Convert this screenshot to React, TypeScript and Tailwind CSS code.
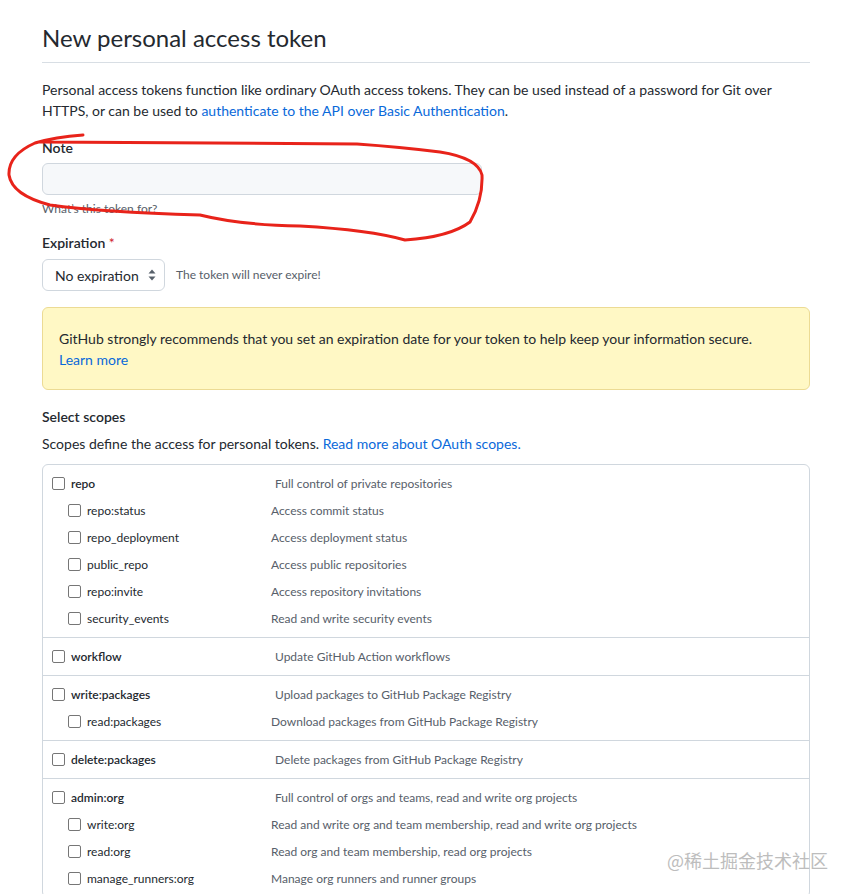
import type { ReactNode } from "react"

type Scope = {
    name: string
    desc: string
    children?: { name: string; desc: string }[]
}

const scopes: Scope[] = [
    {
        name: "repo",
        desc: "Full control of private repositories",
        children: [
            { name: "repo:status", desc: "Access commit status" },
            { name: "repo_deployment", desc: "Access deployment status" },
            { name: "public_repo", desc: "Access public repositories" },
            { name: "repo:invite", desc: "Access repository invitations" },
            { name: "security_events", desc: "Read and write security events" },
        ],
    },
    { name: "workflow", desc: "Update GitHub Action workflows" },
    {
        name: "write:packages",
        desc: "Upload packages to GitHub Package Registry",
        children: [{ name: "read:packages", desc: "Download packages from GitHub Package Registry" }],
    },
    { name: "delete:packages", desc: "Delete packages from GitHub Package Registry" },
    {
        name: "admin:org",
        desc: "Full control of orgs and teams, read and write org projects",
        children: [
            { name: "write:org", desc: "Read and write org and team membership, read and write org projects" },
            { name: "read:org", desc: "Read org and team membership, read org projects" },
            { name: "manage_runners:org", desc: "Manage org runners and runner groups" },
        ],
    },
]

const Box = () => (
    <span className="w-[13px] h-[13px] shrink-0 border border-[#767676] rounded-[2px] bg-white" />
)

function ScopeRow({ name, desc, sub }: { name: string; desc: string; sub?: boolean }): ReactNode {
    return (
        <div className={sub ? "flex items-center h-[27px] pl-[25px]" : "flex items-center h-[27px] pl-[9px]"}>
            <Box />
            <span className={sub
                ? "ml-[6px] w-[184px] shrink-0 text-[12px] text-[#24292f]"
                : "ml-[6px] w-[204px] shrink-0 text-[12px] font-semibold text-[#24292f]"}>
                {name}
            </span>
            <span className="text-[12px] text-[#57606a]">{desc}</span>
        </div>
    )
}

export default function App() {
    return (
        <div className="relative min-h-screen bg-white text-[#24292f] font-['Lato','Noto_Sans_CJK_SC',sans-serif]">
            <div className="ml-[42px] w-[768px] pt-[20px] pb-10">
                <h2 className="text-[24px] leading-[36px] font-normal pb-[6px] border-b border-[#d8dee4]">
                    New personal access token
                </h2>

                <p className="mt-[16px] text-[14px] leading-[21px]">
                    Personal access tokens function like ordinary OAuth access tokens. They can be used instead of a password for Git over HTTPS, or can be used to{" "}
                    <a className="text-[#0969da]">authenticate to the API over Basic Authentication</a>.
                </p>

                <div className="mt-[16px]">
                    <div className="text-[14px] leading-[21px] font-semibold">Note</div>
                    <div className="mt-[5px] w-[440px] h-[32px] bg-[#f6f8fa] border border-[#d0d7de] rounded-[6px]" />
                    <div className="mt-[5px] text-[12px] leading-[18px] text-[#57606a]">What’s this token for?</div>
                </div>

                <div className="mt-[14px]">
                    <div className="text-[14px] leading-[21px] font-semibold">
                        Expiration <span className="text-[#cf222e] font-normal">*</span>
                    </div>
                    <div className="mt-[6px] flex items-center">
                        <div className="w-[123px] h-[32px] flex items-center justify-between pl-[12px] pr-[8px] border border-[#d0d7de] rounded-[6px] bg-white text-[14px]">
                            <span>No expiration</span>
                            <svg width="8" height="12" viewBox="0 0 8 12" className="fill-[#57606a]">
                                <path d="M4 0.5 L7.5 4.5 H0.5 Z" />
                                <path d="M4 11.5 L7.5 7.5 H0.5 Z" />
                            </svg>
                        </div>
                        <span className="ml-[11px] text-[12px] text-[#57606a]">The token will never expire!</span>
                    </div>
                </div>

                <div className="mt-[16px] px-[16px] pt-[20px] pb-[19px] bg-[#fff8c5] border border-[#ecdb94] rounded-[6px] text-[14px] leading-[21px]">
                    GitHub strongly recommends that you set an expiration date for your token to help keep your information secure.
                    <br />
                    <a className="text-[#0969da]">Learn more</a>
                </div>

                <div className="mt-[16px] text-[14px] leading-[21px] font-semibold">Select scopes</div>
                <p className="mt-[6px] text-[14px] leading-[21px]">
                    Scopes define the access for personal tokens. <a className="text-[#0969da]">Read more about OAuth scopes.</a>
                </p>

                <div className="mt-[10px] border border-[#d0d7de] rounded-[6px]">
                    {scopes.map((s, i) => (
                        <div key={s.name} className={i > 0 ? "py-[5px] border-t border-[#d0d7de]" : "py-[5px]"}>
                            <ScopeRow name={s.name} desc={s.desc} />
                            {s.children?.map(c => <ScopeRow key={c.name} name={c.name} desc={c.desc} sub />)}
                        </div>
                    ))}
                </div>
            </div>

            {/* hand-drawn annotation */}
            <svg className="absolute left-0 top-0 pointer-events-none" width="500" height="260">
                <path
                    d="M83,135 Q55,137 35,143 Q8,155 9,175 Q12,195 50,205 Q100,212 200,215 Q240,225 300,226 Q370,230 405,240 Q450,237 470,222 Q483,200 482,175 Q478,158 440,152 Q400,147 357,144 L40,142"
                    fill="none"
                    stroke="#e8231a"
                    strokeWidth="3"
                    strokeLinecap="round"
                    strokeLinejoin="round"
                />
            </svg>

            <div className="absolute left-[667px] top-[847px] text-[18px] leading-[26px] text-[#bdbdbd] font-['Noto_Sans_CJK_SC',sans-serif]">
                @稀土掘金技术社区
            </div>
        </div>
    )
}
